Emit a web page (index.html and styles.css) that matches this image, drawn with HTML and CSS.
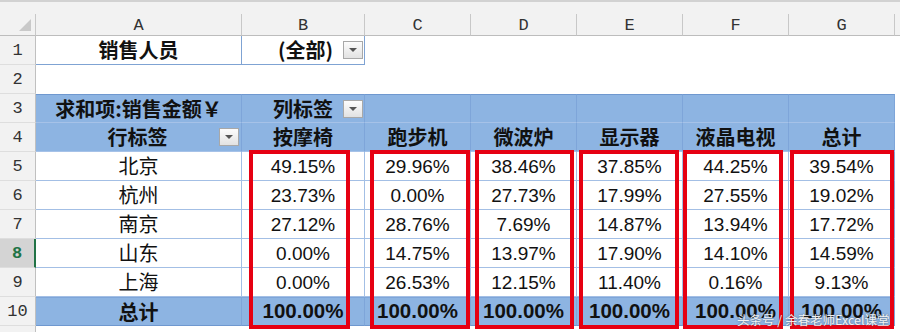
FILE: index.html
```html
<!DOCTYPE html>
<html lang="zh-CN">
<head>
<meta charset="utf-8">
<title>数据透视表</title>
<link rel="stylesheet" href="styles.css">
</head>
<body>
<div class="sheet">
  <div class="topstrip"></div>
  <div class="grid">
    <div class="ch corner"><span class="tri"></span></div>
    <div class="ch">A</div><div class="ch">B</div><div class="ch">C</div><div class="ch">D</div><div class="ch">E</div><div class="ch">F</div><div class="ch">G</div><div class="ch ch-last"></div>

    <div class="rh">1</div>
    <div class="c cn b r1">销售人员</div>
    <div class="c cn b r1 filt"><span>(全部)</span><span class="dd"></span></div>
    <div class="c"></div><div class="c"></div><div class="c"></div><div class="c"></div><div class="c"></div><div class="c"></div>

    <div class="rh">2</div>
    <div class="c"></div><div class="c"></div><div class="c"></div><div class="c"></div><div class="c"></div><div class="c"></div><div class="c"></div><div class="c"></div>

    <div class="rh">3</div>
    <div class="c cn b hd top">求和项:销售金额￥</div>
    <div class="c cn b hd top filt"><span>列标签</span><span class="dd"></span></div>
    <div class="c hd top"></div><div class="c hd top"></div><div class="c hd top"></div><div class="c hd top"></div><div class="c hd top last"></div>
    <div class="c"></div>

    <div class="rh">4</div>
    <div class="c cn b hd rowlab"><span></span><span>行标签</span><span class="dd"></span></div>
    <div class="c cn b hd">按摩椅</div>
    <div class="c cn b hd">跑步机</div>
    <div class="c cn b hd">微波炉</div>
    <div class="c cn b hd">显示器</div>
    <div class="c cn b hd">液晶电视</div>
    <div class="c cn b hd last">总计</div>
    <div class="c"></div>

    <div class="rh">5</div>
    <div class="c cn dt">北京</div>
    <div class="c num dt">49.15%</div><div class="c num dt">29.96%</div><div class="c num dt">38.46%</div><div class="c num dt">37.85%</div><div class="c num dt">44.25%</div><div class="c num dt last">39.54%</div>
    <div class="c"></div>

    <div class="rh">6</div>
    <div class="c cn dt">杭州</div>
    <div class="c num dt">23.73%</div><div class="c num dt">0.00%</div><div class="c num dt">27.73%</div><div class="c num dt">17.99%</div><div class="c num dt">27.55%</div><div class="c num dt last">19.02%</div>
    <div class="c"></div>

    <div class="rh">7</div>
    <div class="c cn dt">南京</div>
    <div class="c num dt">27.12%</div><div class="c num dt">28.76%</div><div class="c num dt">7.69%</div><div class="c num dt">14.87%</div><div class="c num dt">13.94%</div><div class="c num dt last">17.72%</div>
    <div class="c"></div>

    <div class="rh rh-sel">8</div>
    <div class="c cn dt">山东</div>
    <div class="c num dt">0.00%</div><div class="c num dt">14.75%</div><div class="c num dt">13.97%</div><div class="c num dt">17.90%</div><div class="c num dt">14.10%</div><div class="c num dt last">14.59%</div>
    <div class="c"></div>

    <div class="rh">9</div>
    <div class="c cn dt">上海</div>
    <div class="c num dt">0.00%</div><div class="c num dt">26.53%</div><div class="c num dt">12.15%</div><div class="c num dt">11.40%</div><div class="c num dt">0.16%</div><div class="c num dt last">9.13%</div>
    <div class="c"></div>

    <div class="rh">10</div>
    <div class="c cn b hd tot">总计</div>
    <div class="c num b hd tot">100.00%</div><div class="c num b hd tot">100.00%</div><div class="c num b hd tot">100.00%</div><div class="c num b hd tot">100.00%</div><div class="c num b hd tot">100.00%</div><div class="c num b hd tot last">100.00%</div>
    <div class="c"></div>

    <div class="rh rh-end"></div>
    <div class="c"></div><div class="c"></div><div class="c"></div><div class="c"></div><div class="c"></div><div class="c"></div><div class="c"></div><div class="c"></div>
  </div>

  <div class="box box-b"></div>
  <div class="box box-c"></div>
  <div class="box box-d"></div>
  <div class="box box-e"></div>
  <div class="box box-f"></div>
  <div class="box box-g"></div>

  <div class="watermark">头条号 / 余春老师Excel课堂</div>
</div>
</body>
</html>
```

FILE: styles.css
```css
html, body {
  margin: 0;
  padding: 0;
  background: #ffffff;
}

.sheet {
  position: relative;
  width: 900px;
  height: 332px;
  overflow: hidden;
  background: #ffffff;
  color: #111111;
}

.topstrip {
  height: 14px;
  box-sizing: border-box;
  border-top: 2px solid #d2d2d2;
  background: #f2f2f2;
}

.grid {
  display: grid;
  grid-template-columns: 36px 206px 123px 106px 106px 106px 106px 106px 1fr;
  grid-template-rows: 22px repeat(10, 29px) 1fr;
  height: 318px;
}

.grid > div {
  box-sizing: border-box;
  min-width: 0;
}

/* column headers */
.ch {
  background: #f2f2f2;
  border-right: 1px solid #c8c8c8;
  border-bottom: 1px solid #bdbdbd;
  font-family: "Liberation Mono", monospace;
  font-size: 17px;
  color: #333333;
  display: flex;
  align-items: center;
  justify-content: center;
  padding-top: 2px;
}

.ch-last {
  border-right: none;
}

.corner {
  justify-content: flex-end;
  align-items: flex-end;
  padding: 0 4px 4px 0;
}

.tri {
  width: 0;
  height: 0;
  border-left: 12px solid transparent;
  border-bottom: 12px solid #c9c9c9;
}

/* row headers */
.rh {
  background: #f2f2f2;
  border-right: 1px solid #c0c0c0;
  border-bottom: 1px solid #dedede;
  font-family: "Liberation Mono", monospace;
  font-size: 17px;
  color: #333333;
  display: flex;
  align-items: center;
  justify-content: center;
}

.rh-sel {
  background: #d4d4d4;
  color: #217346;
  font-weight: bold;
  border-right: 2px solid #217346;
}

.rh-end {
  border-bottom: none;
}

/* cells */
.c {
  display: flex;
  align-items: center;
  justify-content: center;
  line-height: 1;
  white-space: nowrap;
}

.cn {
  font-family: "Noto Sans CJK SC", "Noto Sans", sans-serif;
  font-size: 20px;
}

.b {
  font-weight: 700;
}

.num {
  font-family: "Liberation Sans", Arial, sans-serif;
  font-size: 19px;
}

.num.b {
  font-size: 20.5px;
}

.r1 {
  border-right: 1px solid #7fa3d3;
  border-bottom: 1px solid #7fa3d3;
}

.filt {
  justify-content: flex-end;
  gap: 10px;
  padding-right: 1px;
}

.dd {
  width: 20px;
  height: 18px;
  box-sizing: border-box;
  border: 1px solid #a8a8a8;
  background: linear-gradient(#fcfcfc, #e2e2e2);
  display: flex;
  align-items: center;
  justify-content: center;
}

.dd::after {
  content: "";
  width: 0;
  height: 0;
  border-left: 4px solid transparent;
  border-right: 4px solid transparent;
  border-top: 4px solid #555555;
}

.hd {
  background: #8db4e2;
  border-right: 1px solid #7ea5d9;
  border-bottom: 1px solid #a6c2e8;
}

.top {
  border-top: 1px solid #6f98cf;
}

.tot {
  border-top: 1px solid #7ea5d9;
  border-bottom: 1px solid #6f98cf;
}

.rowlab {
  display: grid;
  grid-template-columns: 1fr auto 1fr;
  align-items: center;
  padding-right: 2px;
}

.rowlab .dd {
  justify-self: end;
}

.dt {
  background: #ffffff;
  border-right: 1px solid #a3bfe5;
  border-bottom: 1px solid #a3bfe5;
}

.cn.dt {
  font-weight: 400;
}

.last {
  border-right: 1px solid #7ea5d9;
}

/* red annotation boxes */
.box {
  position: absolute;
  top: 150px;
  height: 179px;
  box-sizing: border-box;
  border: 4px solid #e60012;
}

.box-b { left: 249px; width: 101px; }
.box-c { left: 370px; width: 100px; }
.box-d { left: 475px; width: 99px; }
.box-e { left: 579px; width: 100px; }
.box-f { left: 683px; width: 100px; }
.box-g { left: 790px; width: 104px; }

.watermark {
  position: absolute;
  left: 737px;
  top: 312px;
  font-family: "Noto Sans CJK SC", "Noto Sans", sans-serif;
  font-size: 12.5px;
  line-height: 16px;
  color: rgba(255, 255, 255, 0.92);
  text-shadow: 0 0 2px rgba(60, 60, 60, 0.7);
  white-space: nowrap;
}
```
